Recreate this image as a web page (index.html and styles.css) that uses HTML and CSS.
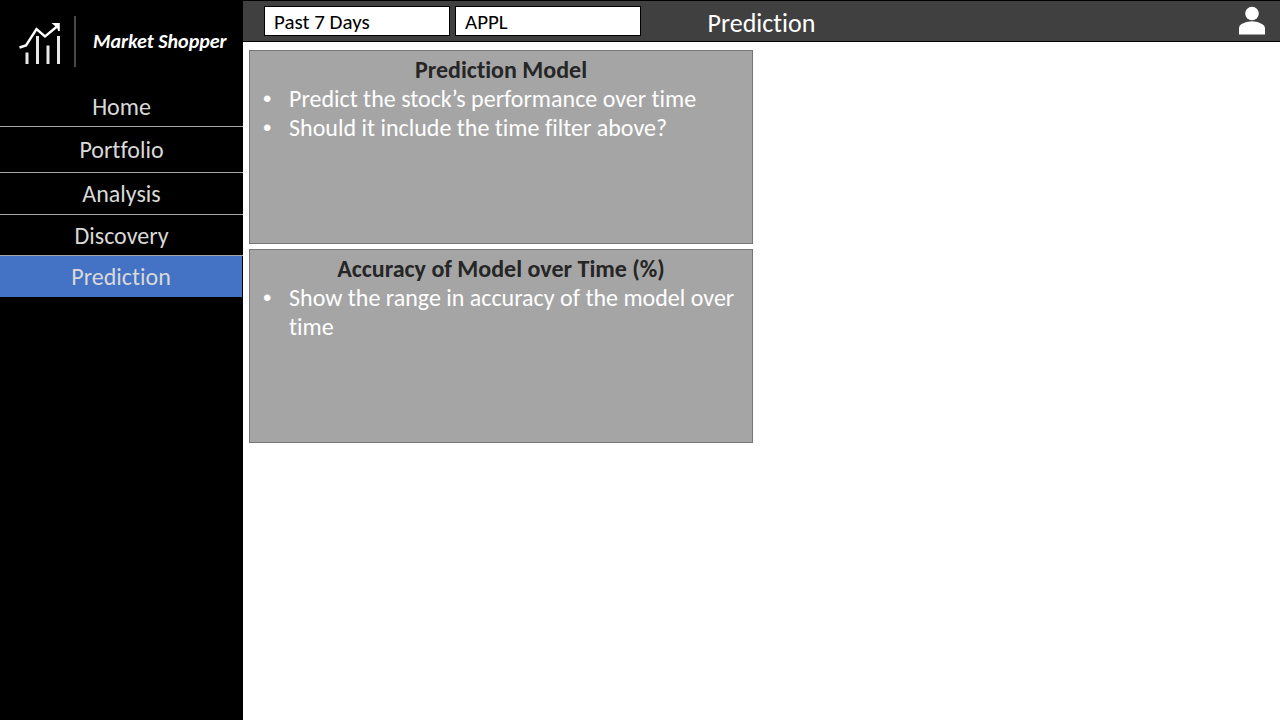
FILE: index.html
```html
<!DOCTYPE html>
<html lang="en">
<head>
<meta charset="utf-8">
<meta name="viewport" content="width=device-width, initial-scale=1">
<title>Market Shopper – Prediction</title>
<link rel="stylesheet" href="styles.css">
</head>
<body>
<div class="app">
  <aside class="sidebar">
    <div class="brand">
      <svg class="brand-icon" viewBox="0 0 42 44" aria-hidden="true">
        <path class="trend" d="M.5 26.500 7 24.500 17.500 8 26 15.500 38 5.500"/>
        <path class="arrow" d="M32.500 2 40.800 2 40.800 10 39 10 38.500 7.500 35.500 4.500Z"/>
        <path class="bars" d="M8 31.500V43M18.500 15V43M29 24.500V43M39.500 15V43"/>
      </svg>
      <span class="brand-name">Market Shopper</span>
    </div>
    <nav class="nav">
      <a class="nav-link" href="#home">Home</a>
      <a class="nav-link nav-link-tall" href="#portfolio">Portfolio</a>
      <a class="nav-link nav-link-mid" href="#analysis">Analysis</a>
      <a class="nav-link" href="#discovery">Discovery</a>
      <a class="nav-link nav-link-active" href="#prediction" aria-current="page">Prediction</a>
    </nav>
  </aside>
  <div class="content">
    <header class="topbar">
      <div class="filters">
        <select class="field" aria-label="Time range"><option>Past 7 Days</option></select>
        <input class="field" type="text" value="APPL" aria-label="Stock symbol">
      </div>
      <h1 class="title">Prediction</h1>
      <button class="account" type="button" aria-label="Account">
        <svg class="account-icon" viewBox="0 0 28 30" aria-hidden="true">
          <circle cx="14" cy="7.500" r="6.800"/>
          <path d="M1 28.500V22Q1 19.500 3.500 18 8 15.300 14 15.300T24 18Q27 19.500 27 22V28.500Z"/>
        </svg>
      </button>
    </header>
    <main class="panels">
      <section class="card">
        <h2 class="card-title">Prediction Model</h2>
        <ul class="card-list">
          <li>Predict the stock’s performance over time</li>
          <li>Should it include the time filter above?</li>
        </ul>
      </section>
      <section class="card">
        <h2 class="card-title">Accuracy of Model over Time (%)</h2>
        <ul class="card-list">
          <li>Show the range in accuracy of the model over time</li>
        </ul>
      </section>
    </main>
  </div>
</div>
</body>
</html>
```
FILE: styles.css
```css
* { box-sizing: border-box; }
body {
  margin: 0;
  background: #fff;
  font-family: Carlito, Calibri, Lato, sans-serif;
  font-size: 24px;
  line-height: 29px;
  font-variant-ligatures: none;
}
.app {
  display: grid;
  grid-template-columns: 243px 1fr;
  min-height: 100vh;
}
.sidebar { background: #000; }
.brand {
  display: flex;
  align-items: center;
  height: 86px;
  padding: 0 16px 4px 19px;
}
.brand-icon { width: 42px; height: 44px; flex: none; margin-top: 4px; }
.trend, .bars { fill: none; stroke: #fff; stroke-width: 2.4; }
.bars { stroke: #e8e8e8; stroke-width: 3; }
.arrow { fill: #fff; }
.brand-name {
  margin-left: 13px;
  padding-left: 17px;
  border-left: 2px solid #484848;
  color: #fff;
  font: italic bold 20px/51px Carlito, Calibri, Lato, sans-serif;
  white-space: nowrap;
}
.nav { display: flex; flex-direction: column; }
.nav-link {
  display: flex;
  align-items: center;
  justify-content: center;
  min-height: 41px;
  border-bottom: 1px solid #a5a5a5;
  color: #d9d9d9;
  text-decoration: none;
}
.nav-link-tall { min-height: 46px; }
.nav-link-mid { min-height: 42px; }
.nav-link-active {
  margin-right: 1px;
  border-bottom-color: #4472c4;
  background: #4472c4;
}
.topbar {
  display: grid;
  grid-template-columns: 1fr auto 1fr;
  align-items: center;
  height: 42px;
  border: 1px solid #000;
  border-width: 1px 0;
  background: #404040;
}
.filters { display: flex; gap: 5px; padding-left: 21px; }
.field {
  appearance: none;
  width: 186px;
  height: 30px;
  padding: 1px 9px 0;
  border: 1px solid #000;
  border-radius: 0;
  background: #fff;
  color: #000;
  font: 21px/28px Carlito, Calibri, Lato, sans-serif;
}
.title {
  margin: 0;
  padding-top: 4px;
  color: #fff;
  font-size: 26px;
  font-weight: 400;
  line-height: 32px;
}
.account {
  justify-self: end;
  width: 28px;
  height: 30px;
  margin-right: 14px;
  padding: 0;
  border: 0;
  background: none;
}
.account-icon { display: block; width: 28px; height: 30px; fill: #fff; }
.panels {
  display: grid;
  grid-template-columns: 1fr 1fr;
  gap: 5px 17px;
  padding: 8px 6px;
}
.card {
  grid-column: 1;
  min-height: 194px;
  padding: 4px 13px;
  border: 1px solid #767676;
  background: #a5a5a5;
  color: #fff;
}
.card-title {
  margin: 0;
  color: #262626;
  font-size: 24px;
  line-height: 29px;
  text-align: center;
}
.card-list { margin: 0; padding: 0; list-style: none; }
.card-list li { display: flex; }
.card-list li::before {
  content: "•";
  flex: none;
  width: 26px;
  font-family: "Liberation Sans", Arial, sans-serif;
}
```
